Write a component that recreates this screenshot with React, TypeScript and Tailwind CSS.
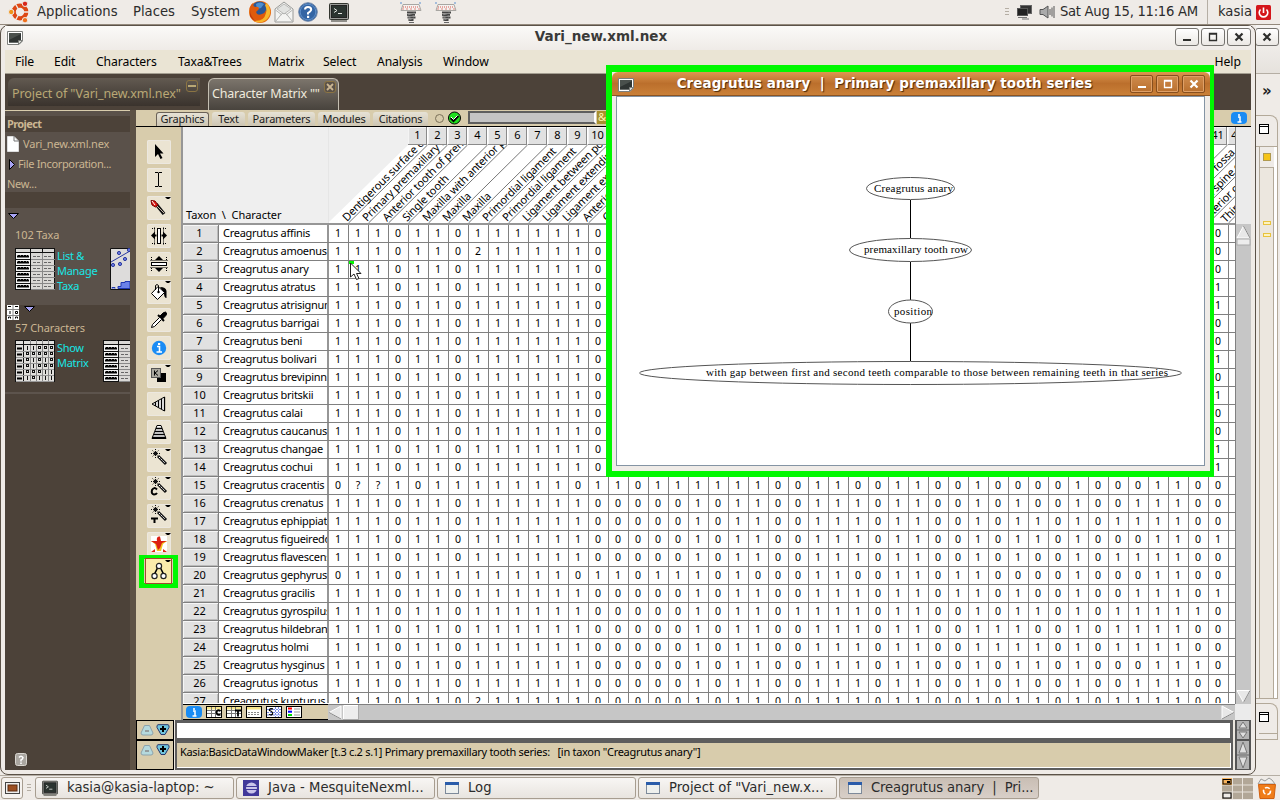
import React from "react";

const UI = "[font-family:'Noto_Sans','Open_Sans',sans-serif]";

const COMMON = "11101101111110";
const MID = "00001011001110110";
const taxa: [string, string][] = [
  ["affinis", COMMON + MID + "01010010111100"],
  ["amoenus", "11101102111110" + MID + "01010010111100"],
  ["anary", COMMON + MID + "01010010111100"],
  ["atratus", COMMON + MID + "01010010111101"],
  ["atrisignum", COMMON + MID + "01010010111101"],
  ["barrigai", COMMON + MID + "01010010111100"],
  ["beni", COMMON + MID + "01010010111100"],
  ["bolivari", COMMON + MID + "01010010111101"],
  ["brevipinnis", COMMON + MID + "01010010111100"],
  ["britskii", COMMON + MID + "01010010111101"],
  ["calai", COMMON + MID + "01010010111100"],
  ["caucanus", COMMON + MID + "01010010111100"],
  ["changae", COMMON + MID + "01010010111101"],
  ["cochui", COMMON + MID + "01010010111101"],
  ["cracentis", "0??10111111101" + "10111111001100110" + "01000010001100"],
  ["crenatus", COMMON + MID + "01010010011100"],
  ["ephippiatus", COMMON + MID + "01011010111100"],
  ["figueiredoi", COMMON + MID + "01011010001101"],
  ["flavescens", COMMON + MID + "01010010111100"],
  ["gephyrus", "01101111111101" + "10111010001100110" + "11000010001100"],
  ["gracilis", COMMON + MID + "11010010011101"],
  ["gyrospilus", COMMON + "00001011011110110" + "01011010111110"],
  ["hildebrandi", COMMON + MID + "01110010111100"],
  ["holmi", COMMON + MID + "01111010111100"],
  ["hysginus", COMMON + MID + "01011010001110"],
  ["ignotus", COMMON + MID + "01010010011100"],
  ["kunturus", "11101102111110" + MID + "01011010111100"],
];

const labels: [number, number, string][] = [
  [0, 0, "Dentigerous surface of"],
  [1, 0, "Primary premaxillary t"],
  [2, 0, "Anterior tooth of prem"],
  [3, 0, "Single tooth"],
  [4, 0, "Maxilla with anterior p"],
  [5, 0, "Maxilla"],
  [6, 0, "Maxilla"],
  [7, 0, "Primordial ligament"],
  [8, 0, "Primordial ligament"],
  [9, 0, "Ligament between pos"],
  [10, 0, "Ligament extending"],
  [11, 0, "Ligament extending"],
  [12, 0, "Anterior margin"],
  [13, 0, "Cartilage"],
  [41, 64, "r fossa"],
  [42, 34, "c spine of"],
  [43, 10, "terior of"],
  [44, -2, "Third"],
];

const columnNumbers = Array.from({ length: 42 }, (_, i) => i + 1);

function Svg({ w, h, className = "", children }: { w: number; h: number; className?: string; children: React.ReactNode }) {
  return (
    <svg width={w} height={h} viewBox={`0 0 ${w} ${h}`} className={`shrink-0 ${className}`}>
      {children}
    </svg>
  );
}

/* ---------- panel icons ---------- */

const Ubuntu = () => (
  <Svg w={24} h={24}>
    <circle cx="12" cy="12" r="6.3" fill="none" stroke="#dd4814" strokeWidth="4.2" />
    <path d="M12 12L21 12M12 12L7.5 4M12 12L7.5 20" stroke="#efebe7" strokeWidth="1.4" />
    <circle cx="12" cy="12" r="3.6" fill="#efebe7" />
    <circle cx="3.2" cy="12" r="2.7" fill="#f09418" stroke="#efebe7" />
    <circle cx="17" cy="3.8" r="2.7" fill="#d8261a" stroke="#efebe7" />
    <circle cx="17" cy="20.2" r="2.7" fill="#f0701c" stroke="#efebe7" />
  </Svg>
);
const Firefox = () => (
  <Svg w={24} h={24}>
    <circle cx="12" cy="12" r="11" fill="#e66a10" />
    <circle cx="11.5" cy="9.5" r="8" fill="#2b5797" />
    <path d="M8 4q4-3 8 0l-3 4-4 1z" fill="#4d8fd0" />
    <path d="M1.5 8Q3 4 5 3Q5 6 7 7Q11 6 11 9L8 12Q9 16 14 14Q17 13 18 10Q20 14 16 18Q8 23 3 16Z" fill="#e05a0c" />
    <path d="M19 3Q25 11 20 18Q14 25 6 21Q16 22 18 13Q19 9 17 5Z" fill="#f9b62b" />
    <path d="M2 9Q2 17 8 21Q4 20 2 16Z" fill="#c0380c" />
  </Svg>
);
const Mail = () => (
  <Svg w={20} h={22}>
    <path d="M1 8L10 1L19 8V21H1Z" fill="#f4f4f2" stroke="#999a98" />
    <path d="M3 8L10 3L17 8L10 13Z" fill="#e2e3e1" stroke="#b8b8b6" />
    <path d="M1.5 20.5L8 12.5H12L18.5 20.5M1.5 9L8 14M18.5 9L12 14" fill="none" stroke="#b5b6b4" />
  </Svg>
);
const Question = () => (
  <Svg w={20} h={20}>
    <circle cx="10" cy="10" r="9.3" fill="#3465a4" stroke="#6f86a8" />
    <circle cx="10" cy="10" r="7.8" fill="none" stroke="#5f8fc8" />
    <path d="M7 7.5Q7 5 10 5Q13.2 5 13.2 7.5Q13.2 9 10 11V12.5" fill="none" stroke="#fff" strokeWidth="2" />
    <rect x="9" y="13.8" width="2.2" height="2.2" fill="#fff" />
  </Svg>
);
const Terminal = ({ s = 20 }: { s?: number }) => (
  <svg width={s} height={s} viewBox="0 0 20 20" className="shrink-0">
    <rect x="0.5" y="1.5" width="19" height="16" rx="1" fill="#9a9b98" stroke="#33352f" />
    <rect x="2.5" y="3.5" width="15" height="12" fill="#2b3430" stroke="#222" />
    <path d="M5 6.5l3 2-3 2M9 11.5h4" fill="none" stroke="#e6e8e4" />
    <path d="M2 19h16" stroke="#33352f" />
  </svg>
);
const Spring = () => (
  <Svg w={22} h={21}>
    <path d="M3 2.5H19L21 8.5H1Z" fill="#f4f2f0" stroke="#a8a6a2" />
    <path d="M3 5h16" stroke="#d8564c" strokeDasharray="1 1" />
    <path d="M2 7h18" stroke="#e08a82" strokeDasharray="2 2" />
    <path d="M0 1h3M19 1h3" stroke="#5a8fd0" strokeDasharray="2 1" />
    <path d="M7 10.5h9M7 13h8M7.5 15.5h8M8.5 18h5" stroke="#444" strokeWidth="1.8" />
    <path d="M14.5 11l-7 2M14.5 13.5l-6 2M14 16l-5 2" stroke="#888" />
    <path d="M9 20.5h5" stroke="#666" />
  </Svg>
);
const Network = () => (
  <Svg w={15} h={15}>
    <rect x="3.5" y="0.5" width="11" height="8" fill="#333" stroke="#666" />
    <rect x="0.5" y="3.5" width="10" height="7" fill="#222" stroke="#555" />
    <path d="M1 12.5h9M5 14h7" stroke="#777" />
  </Svg>
);
const Volume = () => (
  <Svg w={16} h={14}>
    <path d="M1 4.5H4L9 1V13L4 9.5H1Z" fill="#aaa" stroke="#555" />
    <path d="M11 4v6M13 2.5v9M15 1v12" stroke="#555" />
  </Svg>
);
const Power = () => (
  <Svg w={15} h={15}>
    <rect width="15" height="15" rx="1.5" fill="#d4161b" />
    <path d="M4.5 4.5A4.3 4.3 0 1 0 10.5 4.5M7.5 2.5V8" fill="none" stroke="#fff" strokeWidth="1.6" />
  </Svg>
);
const Note = () => (
  <Svg w={16} h={14}>
    <path d="M0.5 0.5H15.5V10L12 13.5H0.5Z" fill="#fff" stroke="#7d7f7c" />
    <path d="M2 2H14V9L11 11.5H2Z" fill="#4a504c" />
    <path d="M2 9L14 3V9L11 11.5H2Z" fill="#2f3432" />
    <path d="M15.5 9.5H11.5V13.5Z" fill="#d8dad6" stroke="#7d7f7c" />
  </Svg>
);

function WinButton({ kind, orange = false }: { kind: "min" | "max" | "close"; orange?: boolean }) {
  const c = orange ? "#fff" : "#2e2e2c";
  return (
    <div
      className={
        orange
          ? "flex h-[18px] w-[23px] items-center justify-center rounded-[2px] border border-[#874f1e] bg-linear-to-b from-[#cf8b4c] to-[#b9702e] shadow-[inset_0_0_0_1px_#dfa067]"
          : "flex h-[18px] w-6 items-center justify-center rounded-[3px] border border-[#75736f] bg-linear-to-b from-white to-[#ebe8e4]"
      }
    >
      <Svg w={10} h={10}>
        {kind === "min" && <path d="M1 8h8" stroke={c} strokeWidth="2" />}
        {kind === "max" && <path d="M1.5 1.5h7v7h-7zM1 2h8" fill="none" stroke={c} strokeWidth="1.3" />}
        {kind === "close" && <path d="M1.5 1.5l7 7M8.5 1.5l-7 7" stroke={c} strokeWidth="2.2" />}
      </Svg>
    </div>
  );
}

/* ---------- tool palette ---------- */

const wand = (
  <>
    <circle cx="8.5" cy="5.5" r="2" fill="#111" />
    <path d="M8.5 1v9M4 5.5h9M5.5 2.5l6 6M11.5 2.5l-6 6" stroke="#111" strokeDasharray="1 1" />
    <path d="M11 8L19 16" stroke="#111" strokeWidth="3" />
    <path d="M12 9L18 15" stroke="#fff" strokeDasharray="2 1" />
  </>
);

const tools: { menu?: boolean; art: React.ReactNode }[] = [
  { art: <path d="M8 4V17L11 14L13.5 19L15.5 18L13 13.5H16.5Z" fill="#000" /> },
  { art: <path d="M8 4.5h3l.5 1 .5-1h3M11.5 5v13M8 18.5h3l.5-1 .5 1h3" fill="none" stroke="#000" /> },
  {
    menu: true,
    art: (
      <>
        <path d="M9 8L17 18" stroke="#111" strokeWidth="3.5" />
        <path d="M10 10L17 17" stroke="#c9b9a8" />
        <path d="M4 4.5L8 5L11 9L8.5 11L5 9Z" fill="#e01a14" stroke="#700" />
        <path d="M5 5l3 4" stroke="#fff" />
      </>
    ),
  },
  {
    art: (
      <>
        <rect x="10.5" y="4.5" width="3" height="15" fill="#fff" stroke="#000" />
        <path d="M4 11.5l4-4v8zM20 11.5l-4-4v8z" fill="#000" />
        <path d="M8 11.5h1.500M14.500 11.5h2" stroke="#000" strokeWidth="2" />
        <path d="M7.5 3.5v17M16.5 3.5v17M5 4.5h3M16 4.5h4M5 19.5h3M16 19.5h4" stroke="#000" strokeDasharray="1 1" />
      </>
    ),
  },
  {
    art: (
      <>
        <rect x="4.5" y="10.5" width="15" height="3" fill="#fff" stroke="#000" />
        <path d="M12 4l4 4h-8zM12 20l4-4h-8z" fill="#000" />
        <path d="M3.5 8.5h17M3.5 15.5h17M4.500 5v4M19.500 5v4M4.500 16v4M19.500 16v4" stroke="#000" strokeDasharray="1 1" />
      </>
    ),
  },
  {
    menu: true,
    art: (
      <>
        <path d="M13 7Q19 7 19.5 11V18Q17 18 17 13Z" fill="#000" />
        <path d="M4.5 13.5L11 6.5L17.5 12.5L10.5 19.5Z" fill="#fff" stroke="#000" />
        <path d="M8.5 10V5.5Q10 3.5 11.5 5.5V11" fill="none" stroke="#000" />
        <circle cx="11.5" cy="12" r="1.2" fill="#000" />
      </>
    ),
  },
  {
    art: (
      <>
        <path d="M13 8L16 5Q19 3 19.5 5Q20 7 17.5 9L15.5 11Z" fill="#000" stroke="#000" />
        <path d="M11 7L17 13" stroke="#000" strokeWidth="2" />
        <path d="M12.5 9.5L5.5 16.5L4.5 19.5L7.5 18.5L14.5 11.5" fill="#fff" stroke="#000" />
      </>
    ),
  },
  {
    art: (
      <>
        <circle cx="12" cy="12" r="7.2" fill="#1a8cf4" />
        <path d="M10 10.5h2.5v5.5M9.5 16h5.5" stroke="#fff" strokeWidth="1.6" fill="none" />
        <rect x="11" y="7" width="2.2" height="2" fill="#fff" />
      </>
    ),
  },
  {
    menu: true,
    art: (
      <>
        <rect x="10" y="9" width="9" height="9" fill="#000" />
        <rect x="4.5" y="4.5" width="9" height="9" fill="#aaa89f" stroke="#555" />
        <path d="M7.5 6.5v5M11 6.5l-3 2.5 3 2.5" fill="none" stroke="#000" />
      </>
    ),
  },
  {
    art: (
      <>
        <path d="M5 12L17.5 5V19Z" fill="#fff" stroke="#000" />
        <path d="M8.5 10v4M11.5 8.5v7M14.5 7v10M17.5 5v14" stroke="#000" strokeWidth="1.3" />
      </>
    ),
  },
  {
    art: (
      <>
        <path d="M10 5.5H14L19 18.5H5Z" fill="#fff" stroke="#000" />
        <path d="M9 8.5h6M8 11.5h8M7 14.5h10M5 17.5h14" stroke="#000" strokeWidth="1.3" />
      </>
    ),
  },
  { menu: true, art: wand },
  {
    menu: true,
    art: (
      <>
        {wand}
        <path d="M10 13.5Q7 10.5 5 14Q4 18 7 18.5Q9 18.5 10 17" fill="none" stroke="#000" strokeWidth="2" />
      </>
    ),
  },
  {
    menu: true,
    art: (
      <>
        {wand}
        <path d="M4 14.5h7M7.5 14v5" stroke="#000" strokeWidth="2" />
      </>
    ),
  },
  {
    menu: true,
    art: (
      <>
        <rect x="4" y="4" width="16" height="16" fill="#fff" />
        <path d="M4 9H20L16 12L14 19H10L8 12Z" fill="#f4c020" />
        <path d="M4 9L10 9Q9 4 13 4.5L14 9H20L15 11L13 16L11 18L9 12Z" fill="#dc1f12" />
        <path d="M4 20l4-3v3zM20 20l-4-3v3z" fill="#e02818" />
      </>
    ),
  },
];

function ToolPalette() {
  return (
    <div className="flex w-[45px] shrink-0 flex-col items-center gap-1 bg-[#d8ccac] pt-[13px] pl-px">
      {tools.map((t, i) => (
        <div key={i} className="size-6 shrink-0 rounded-[2px] bg-[#ebe4d2] shadow-[inset_0_0_0_1px_#ece8e0]">
          <Svg w={24} h={24}>
            {t.art}
            {t.menu && <path d="M18 1h6l-1 1-1 1h-2l-1-1z" fill="#000" />}
          </Svg>
        </div>
      ))}
      <div className="-mt-[5px] -ml-px flex h-[33px] w-[39px] shrink-0 items-center justify-center border-[5px] border-t-4 border-[#00f800] bg-[#ddd0b0]">
        <div className="flex h-[26px] w-[27px] shrink-0 items-center justify-center border border-[#a04a30] bg-[#fbecab]">
          <Svg w={24} h={24}>
            <path d="M11 8L7 16M13 8L17 16" stroke="#000" strokeWidth="1.6" />
            <circle cx="12" cy="7" r="2.6" fill="#fff" stroke="#222" strokeWidth="1.2" />
            <circle cx="7.5" cy="17" r="2.6" fill="#fff" stroke="#222" strokeWidth="1.2" />
            <circle cx="16.5" cy="17" r="2.6" fill="#fff" stroke="#222" strokeWidth="1.2" />
            <path d="M18 1h6l-1 1-1 1h-2l-1-1z" fill="#000" />
          </Svg>
        </div>
      </div>
    </div>
  );
}

/* ---------- project sidebar ---------- */

const ListIcon = ({ w = 40 }: { w?: number }) => (
  <svg width={w} height={42} viewBox={`0 0 ${w} 42`} className="shrink-0">
    <rect x="0.5" y="0.5" width="39" height="41" fill="#d9d8d5" stroke="#111" />
    <rect x="1" y="5" width="14" height="36" fill="#f4f4f4" />
    <path d="M0 4.5h40M15.5 0v42M27.5 0v4" stroke="#111" />
    {[8, 14, 20, 26, 32, 38].map((y) => (
      <g key={y}>
        <path d={`M2 ${y}.5h12`} stroke="#000" strokeWidth="2" />
        <path d={`M3 ${y - 1}.5h10`} stroke="#000" strokeDasharray="2 1" />
        <path d={`M18 ${y}.5h7M29 ${y}.5h8`} stroke="#666" strokeDasharray="3 1" />
        <path d={`M16 ${y + 3}.5h24`} stroke="#888" />
        <path d={`M0 ${y + 3}.5h15`} stroke="#111" />
      </g>
    ))}
    <path d="M27.5 5v36" stroke="#888" />
  </svg>
);

const MatrixIcon = () => (
  <Svg w={40} h={42}>
    <rect x="0.5" y="0.5" width="39" height="41" fill="#e0dfdc" stroke="#111" />
    <path d="M0 4.5h40M8.5 0v42" stroke="#111" />
    {["11000", "00000", "01010", "01000", "00011", "10111"].map((row, r) => (
      <g key={r}>
        <path d={`M2 ${8 + r * 6}.5h5`} stroke="#000" strokeWidth="2" />
        <path d={`M1 ${11 + r * 6}.5h38`} stroke="#999" />
        {row.split("").map((v, c) =>
          v === "1" ? (
            <path key={c} d={`M${12 + c * 6}.5 ${6 + r * 6}v4`} stroke="#111" />
          ) : (
            <rect key={c} x={11.5 + c * 6} y={6.5 + r * 6} width="2" height="2" fill="none" stroke="#111" />
          ),
        )}
      </g>
    ))}
    <path d="M15.5 5v36M21.5 5v36M27.5 5v36M33.5 5v36M15.5 0v4M21.5 0v4M27.5 0v4M33.5 0v4" stroke="#888" />
  </Svg>
);

const ChartIcon = () => (
  <Svg w={20} h={42}>
    <path d="M20 0.5H0.5V41.5H20" fill="#dddcdb" stroke="#111" />
    <path d="M1 14L20 3" stroke="#2b3aa0" />
    {[[9, 5], [15, 11], [10, 16], [3, 17], [19, 2]].map(([x, y]) => (
      <circle key={`${x}-${y}`} cx={x} cy={y} r="1.6" fill="#6b7be0" stroke="#2b3aa0" />
    ))}
    <path d="M2 40.5v-1h3v1M8 40.5v-2h3v-4h4v-1h5v7z" fill="#6b82e8" stroke="#2038b0" />
  </Svg>
);

const Disclosure = () => (
  <svg width={12} height={7} viewBox="0 0 12 7" className="block">
    <path d="M0.5 0.5H10.5L5.5 5.5Z" fill="#a8a4f4" stroke="#000" />
  </svg>
);

function Sidebar() {
  return (
    <div className={`flex w-[131px] shrink-0 border-r-[6px] border-[#5d5245] ${UI} text-[11px] tracking-[-0.1px] text-[#cbb692]`}>
      <div className="flex w-[125px] flex-col overflow-hidden bg-[#4c4239]">
        <div className="h-1.5 shrink-0 border-t border-[#d8ccac] bg-[#5a514a]" />
        <div className="flex h-4 shrink-0 items-center pt-px pl-0.5 text-[11px] font-bold tracking-[-0.6px]">Project</div>
        <div className="flex h-[60px] shrink-0 flex-col bg-[#5a514a] whitespace-nowrap">
          <div className="flex h-6 shrink-0 items-center pl-0.5">
            <Svg w={12} h={16}>
              <path d="M0.5 0.5H7L11.5 5V15.5H0.5Z" fill="#fff" stroke="#ddd" />
              <path d="M7 0V5H12" fill="none" stroke="#777" />
            </Svg>
            <span className="ml-1 tracking-[-0.2px]">Vari_new.xml.nex</span>
          </div>
          <div className="flex h-4 shrink-0 items-center pl-1">
            <Svg w={6} h={11}>
              <path d="M0.5 0.5L5.5 5.5L0.5 10.5Z" fill="#a8a4f4" stroke="#000" />
            </Svg>
            <span className="ml-[3px] tracking-[-0.35px]">File Incorporation...</span>
          </div>
          <div className="flex h-6 shrink-0 items-center pl-0.5 tracking-[-0.3px]">New...</div>
        </div>
        <div className="h-4 shrink-0" />
        <div className="flex h-[97px] shrink-0 flex-col bg-[#5a514a] pt-[5px]">
          <div className="pl-[3px]"><Disclosure /></div>
          <div className="mt-1.5 h-[17px] pl-2.5 leading-[17px]">102 Taxa</div>
          <div className="mt-[5px] flex pl-2.5">
            <ListIcon />
            <div className="ml-0.5 w-[53px] shrink-0 leading-[15px] tracking-[-0.3px] text-[#17e6e6]">List &amp;<br />Manage<br />Taxa</div>
            <ChartIcon />
          </div>
        </div>
        <div className="flex h-[89px] shrink-0 flex-col border-b-2 border-[#5d544d] pl-0.5">
          <div className="flex h-[15px] items-start">
            <Svg w={12} h={15}>
              <rect width="12" height="15" fill="#fff" />
              <path d="M6 0v15M0 4.5h12M0 10.5h12" stroke="#888" />
              <path d="M1 1.5h3M8 1.5h3M3 6v3M1.5 13.5v-1.5h2v1.5M8.5 13.5v-1.5h2v1.5M8.5 6.5h2v2h-2z" fill="none" stroke="#000" />
            </Svg>
            <div className="ml-[5px] pt-px"><Disclosure /></div>
          </div>
          <div className="h-[15px] pl-2 leading-[15px]">57 Characters</div>
          <div className="mt-1 flex pt-px pl-2">
            <MatrixIcon />
            <div className="ml-0.5 w-[46px] shrink-0 leading-[15px] tracking-[-0.3px] text-[#17e6e6]">Show<br />Matrix</div>
            <ListIcon w={27} />
          </div>
        </div>
        <div className="mt-auto mb-1 ml-2.5">
          <Svg w={12} h={13}>
            <rect x="0.5" y="0.5" width="11" height="12" rx="2" fill="#aaa6a0" stroke="#d9d6d0" />
            <path d="M4 4.5Q6 2 8 4.5Q8 6 6 7V8.5M6 9.5V11" fill="none" stroke="#fff" strokeWidth="1.5" />
          </Svg>
        </div>
      </div>
    </div>
  );
}

/* ---------- matrix ---------- */

function MatrixHeader() {
  return (
    <div className="relative h-[98px] w-[1052px] shrink-0 overflow-hidden border-b-2 border-[#969696] bg-[#efefef]">
      <svg width={1052} height={96} className="absolute top-0 left-0">
        <path d="M145 96L225 18H1052V96Z" fill="#fff" />
        <path d="M225 18V0H1052V18Z" fill="#fff" />
        <path d="M145.5 0V96" stroke="#e6e6e6" />
        {Array.from({ length: 45 }, (_, i) => (
          <path key={i} d={`M${165.5 + i * 20} 96l79 -78`} stroke="#777" />
        ))}
      </svg>
      {labels.map(([col, shift, text]) => (
        <span
          key={col}
          className="absolute top-[83px] left-[166px] origin-bottom-left text-[11px] leading-[14px] tracking-[-0.2px] whitespace-nowrap text-black"
          style={{ transform: `translate(${col * 20 + shift * 0.707}px, ${-shift * 0.707}px) rotate(-45deg)` }}
        >
          {text}
        </span>
      ))}
      <div className="absolute top-0 left-[225px] flex">
        {columnNumbers.map((n) => (
          <div
            key={n}
            className="mr-px flex h-[18px] w-[19px] shrink-0 items-center justify-center border-r border-b border-[#8a8a8a] bg-[#e1e1e1] pl-px text-[11px] text-black shadow-[inset_1px_1px_0_#f4f4f4]"
          >
            {n}
          </div>
        ))}
      </div>
      <div className="absolute top-[81px] left-[3px] text-[11px] leading-[14px] tracking-[-0.05px] whitespace-pre">{"Taxon  \\  Character"}</div>
    </div>
  );
}

function Matrix() {
  return (
    <div className={`flex min-w-0 flex-1 flex-col border-l-2 border-[#969696] bg-white ${UI} text-[11px] text-black`}>
      <div className="flex h-[577px]">
        <div className="flex w-[1052px] shrink-0 flex-col overflow-hidden">
          <MatrixHeader />
          <div className="flex h-[478px] flex-col overflow-hidden">
            {taxa.map(([name, states], r) => (
              <div key={name} className="flex h-[18px] shrink-0 border-b border-[#808080]">
                <div className="flex w-[36px] shrink-0 items-center justify-center border-r border-[#808080] bg-[#e1e1e1] pr-0.5 shadow-[inset_1px_1px_0_#f6f6f6,inset_-1px_-1px_0_#bbb]">
                  {r + 1}
                </div>
                <div className="flex w-[110px] shrink-0 items-center overflow-hidden border-r-2 border-[#969696] pl-1 tracking-[-0.28px] whitespace-nowrap">
                  Creagrutus {name}
                </div>
                {states.split("").map((s, c) => (
                  <div key={c} className="flex w-5 shrink-0 items-center justify-center border-r border-[#808080] pr-px text-[10.5px]">
                    {s}
                  </div>
                ))}
              </div>
            ))}
          </div>
        </div>
        <div className="flex w-4 shrink-0 flex-col border-l border-[#808080] bg-[#c6c6c6]">
          <div className="h-[97px] w-[15px] bg-[#ebebeb]" />
          <Svg w={15} h={22}>
            <path d="M7.5 2L14 14H1Z" fill="#e8e8e8" stroke="#fff" />
            <path d="M7.5 2L14 14" stroke="#888" />
            <rect x="1" y="15" width="13" height="6" fill="#ededed" stroke="#aaa" />
          </Svg>
          <div className="flex-1" />
          <Svg w={15} h={14}>
            <path d="M1 0.5H14L7.5 12.5Z" fill="#e8e8e8" stroke="#fff" />
            <path d="M14 0.5L7.5 12.5" stroke="#888" />
          </Svg>
        </div>
      </div>
      <div className="flex h-4 shrink-0 bg-[#ebebeb]">
        <div className="flex w-[145px] items-center gap-1 border-t border-b border-black bg-[#d8ccac] pl-[3px]">
          <Svg w={16} h={12}>
            <rect width="16" height="12" rx="4" fill="#1a8cf4" />
            <path d="M7 5h2v5M6.5 10h4M8 2v2" fill="none" stroke="#fff" strokeWidth="1.5" />
          </Svg>
          {["C", "T", "", "S", "L"].map((k, i) => (
            <Svg key={i} w={16} h={12}>
              <rect x="0.5" y="0.5" width="15" height="11" fill="#fff" stroke="#000" />
              {k !== "L" && k !== "S" && <rect x="1" y="1" width="14" height="2.5" fill="#f6e58a" />}
              {(k === "C" || k === "T") && <path d="M1 4.5h14M1 7.5h14M5.5 1v10M9.5 1v10" stroke="#777" />}
              {k === "C" && <path d="M14.5 5Q11 3 10.5 6.5Q11 10 14.5 8.5" fill="none" stroke="#000" strokeWidth="1.8" />}
              {k === "T" && <path d="M9 4.5h6M12 4.5v6" stroke="#000" strokeWidth="1.8" />}
              {k === "" && <path d="M2 6.5h12M2 8.5h12" stroke="#888" strokeDasharray="2 1" />}
              {k === "S" && (
                <>
                  <path d="M1 3.5h14M1 6.5h14M1 9h14M9.5 1v10M12.5 1v10" stroke="#7a8ce8" strokeDasharray="2 1" />
                  <path d="M7 3Q3 2 3.5 4.5Q7 5.5 6.5 8Q6 9.5 3 8.5" fill="none" stroke="#000" strokeWidth="1.3" />
                </>
              )}
              {k === "L" && (
                <>
                  <path d="M2 2.5h4" stroke="#f00" strokeWidth="2" />
                  <path d="M2 5.7h4" stroke="#00f" strokeWidth="2" />
                  <path d="M2 9h4" stroke="#0d0" strokeWidth="2" />
                  <path d="M8 3h6M8 6h6M8 9h6" stroke="#999" />
                </>
              )}
            </Svg>
          ))}
        </div>
        <div className="flex w-[907px] items-center justify-between border-t border-[#808080] bg-[#c6c6c6]">
          <Svg w={32} h={15}>
            <path d="M1 7.5L13 1V14Z" fill="#e8e8e8" stroke="#fff" />
            <path d="M1 7.5L13 14" stroke="#888" />
            <rect x="15.5" y="0.5" width="15" height="14" fill="#ededed" stroke="#aaa" />
            <path d="M15.5 14V0.5H30" fill="none" stroke="#fff" />
          </Svg>
          <Svg w={14} h={15}>
            <path d="M1 1V14L13 7.5Z" fill="#e8e8e8" stroke="#fff" />
            <path d="M1 14L13 7.5" stroke="#888" />
          </Svg>
        </div>
      </div>
    </div>
  );
}

const Stepper = ({ h }: { h: number }) => (
  <Svg w={16} h={h} className="ml-0.5">
    <rect width="16" height={h} fill="#555" />
    <rect x="2" y="1" width="12" height={h - 2} fill="#b4b4b4" />
    <path d={`M8 2L12 ${h / 2 - 2}H4Z M4 ${h / 2 + 2}H12L8 ${h - 2}Z`} fill="#e0e0e0" stroke="#777" />
    <path d={`M2 ${h / 2}h12`} stroke="#666" />
  </Svg>
);

function Console() {
  const fold = (
    <>
      <Svg w={14} h={12}>
        <path d="M4.5 1.5H9.5L13 9Q13 11 11 11H3Q1 11 1 9Z" fill="#b5d9dd" stroke="#8ca3ac" />
        <path d="M5 7h4" stroke="#888" strokeWidth="1.5" />
      </Svg>
      <Svg w={14} h={12}>
        <path d="M2 0.7H12Q13.5 1 13 3.5L9 10.5H5L1 3.5Q0.5 1 2 0.7Z" fill="#70c5dc" stroke="#26366c" />
        <path d="M4 5h6M7 2v6" stroke="#000" strokeWidth="2" />
      </Svg>
    </>
  );
  return (
    <div className="flex h-[50px] shrink-0 flex-col bg-[#ece8e0]">
      <div className="flex h-5">
        <div className="flex w-[38px] justify-center gap-0.5 border border-black bg-[#d8ccac] pt-[3px]">{fold}</div>
        <div className="ml-px flex w-[1059px] border-2 border-t-[3px] border-r-[3px] border-[#5d5d5d] bg-white" />
        <Stepper h={20} />
      </div>
      <div className="flex h-[30px]">
        <div className="flex w-[38px] justify-center gap-0.5 border border-black bg-[#d8ccac] pt-[3px]">{fold}</div>
        <div className={`ml-px flex w-[1059px] items-start border-2 border-t-[3px] border-[#5d5d5d] bg-[#d8ccac] pl-[3px] ${UI} text-[11px] leading-[17px] tracking-[-0.29px] whitespace-pre text-black shadow-[inset_-1px_-1px_0_#fff]`}>
          {"Kasia:BasicDataWindowMaker [t.3 c.2 s.1] Primary premaxillary tooth series:   [in taxon \"Creagrutus anary\"]"}
        </div>
        <Stepper h={30} />
      </div>
    </div>
  );
}

function SubTabs() {
  const tab = "flex h-[14px] items-center justify-center rounded-t-[3px] bg-linear-to-b from-[#e6e2d6] to-[#cdc5b2]";
  return (
    <div className={`flex h-[17px] shrink-0 items-end border-b border-black bg-[#d8ccac] ${UI} text-[11px] tracking-[-0.2px] text-[#222]`}>
      <div className={`${tab} ml-5 w-[53px] border border-b-0 border-[#6b6258] bg-[#e2dfd8]`}>Graphics</div>
      <div className={`${tab} ml-[3px] w-[33px]`}>Text</div>
      <div className={`${tab} ml-[3px] w-[67px]`}>Parameters</div>
      <div className={`${tab} ml-[3px] w-[52px]`}>Modules</div>
      <div className={`${tab} ml-[3px] w-[55px]`}>Citations</div>
      <Svg w={40} h={16} className="ml-1">
        <circle cx="7.5" cy="8.5" r="4" fill="none" stroke="#7a7058" />
        <circle cx="22.5" cy="8" r="6" fill="#1fe01f" stroke="#000" />
        <path d="M18.5 8l3 3 5-5" fill="none" stroke="#000" strokeWidth="2" />
        <path d="M19 7l2.5 2.5 4-4" fill="none" stroke="#fff" />
      </Svg>
      <div className="mb-0.5 -ml-1 h-[13px] w-[128px] border-2 border-[#5e5e5e] border-r-white bg-[#c4c4c4]" />
      <div className="mb-0.5 ml-px flex h-[13px] w-3 items-center bg-[#a8902e] pl-px text-[#fff6b0]">&amp;</div>
      <div className="mr-1 mb-0.5 ml-auto">
        <Svg w={16} h={12}>
          <rect width="16" height="12" rx="4" fill="#1a8cf4" />
          <path d="M7 5h2v5M6.5 10h4M8 2v2" fill="none" stroke="#fff" strokeWidth="1.5" />
        </Svg>
      </div>
    </div>
  );
}

function MainWindow() {
  const menu: [string, string][] = [
    ["File", "w-[39px]"], ["Edit", "w-[42px]"], ["Characters", "w-[82px]"], ["Taxa&Trees", "w-[90px]"],
    ["Matrix", "w-[55px]"], ["Select", "w-[54px]"], ["Analysis", "w-[66px]"], ["Window", "w-[60px]"],
  ];
  return (
    <div className="flex w-[1256px] shrink-0 flex-col rounded-lg border border-[#5b5248] bg-[#efebe7] px-1">
      <div className="flex h-6 shrink-0 items-start bg-linear-to-b from-[#fbfaf8] to-[#efebe7] pl-0.5">
        <div className="w-5 pt-[5px]"><Note /></div>
        <div className="flex-1 pt-px text-center font-['DejaVu_Sans',sans-serif] text-[13.5px] leading-[18px] font-bold text-[#3a3a38]">Vari_new.xml.nex</div>
        <div className="flex gap-0.5 pt-0.5">
          <WinButton kind="min" />
          <WinButton kind="max" />
          <WinButton kind="close" />
        </div>
      </div>
      <div className={`flex h-6 shrink-0 items-center border-b border-[#a39d90] bg-[#eae4d4] pt-0.5 pl-2.5 ${UI} text-[12.2px] text-black`}>
        {menu.map(([m, w]) => (
          <div key={m} className={`${w} shrink-0 tracking-[-0.1px] whitespace-nowrap`}>{m}</div>
        ))}
        <div className="ml-auto pr-2.5">Help</div>
      </div>
      <div className={`flex h-9 shrink-0 bg-[#4c4239] pt-1 pl-[3px] ${UI} text-[12.5px]`}>
        <div className="relative flex h-7 w-48 items-center rounded-tl-md bg-linear-to-b from-[#625a51] to-[#3a332d] pl-1 whitespace-nowrap text-[#b9a875]">
          <span className="pt-1 tracking-[-0.08px]">Project of "Vari_new.xml.nex"</span>
          <div className="absolute top-0.5 right-0.5 flex size-3 items-center justify-center rounded-[3px] border border-[#8b7443]">
            <div className="h-0.5 w-2 bg-[#b9a875]" />
          </div>
        </div>
        <div className="relative ml-2 flex h-8 w-[131px] items-center rounded-t-md border border-b-0 border-[#c5bfb2] bg-linear-to-b from-[#7c756c] to-[#48433d] pl-[3px] whitespace-nowrap text-[#efeadd]">
          <span className="tracking-[-0.22px]">Character Matrix ""</span>
          <div className="absolute top-0.5 right-0.5 flex size-3 items-center justify-center rounded-[3px] border border-[#8b7443] bg-[#5b5248]">
            <Svg w={8} h={8}><path d="M1 1l6 6M7 1l-6 6" stroke="#cbb692" strokeWidth="1.8" /></Svg>
          </div>
        </div>
      </div>
      <div className="flex h-[660px] shrink-0">
        <Sidebar />
        <div className="flex min-w-0 flex-1 flex-col">
          <SubTabs />
          <div className="flex h-[593px] shrink-0">
            <ToolPalette />
            <Matrix />
          </div>
          <Console />
        </div>
      </div>
    </div>
  );
}

/* ---------- window behind ---------- */

function BackWindow() {
  const restore = (
    <Svg w={10} h={10}>
      <rect x="0.5" y="0.5" width="9" height="9" fill="#fff" stroke="#000" />
      <path d="M0 2.5h10" stroke="#000" />
    </Svg>
  );
  return (
    <div className="flex flex-1 flex-col overflow-hidden bg-[#efebe7]">
      <div className="-ml-px flex h-[49px] shrink-0 items-start border-b border-[#b5aea4] bg-linear-to-b from-[#f6f4f2] to-[#e6e2dd] pt-[3px]">
        <WinButton kind="close" />
      </div>
      <div className="flex h-[41px] shrink-0 items-start pt-2">
        <span className="pl-1.5 font-['DejaVu_Sans',sans-serif] text-[15px] leading-[18px] font-bold text-[#222]">»</span>
      </div>
      <div className="mr-0.5 flex h-8 shrink-0 items-center rounded-tr-lg border-t border-r border-b border-[#b3a999] pb-1 pl-[3px]">{restore}</div>
      <div className="mr-0.5 flex h-[552px] shrink-0 border-r border-b border-[#b3a999] bg-white pr-[3px]">
        <div className="w-1 border-r border-[#b3a999] bg-[#efebe7]" />
        <div className="flex w-3.5 flex-col items-center bg-[#efebe7] pt-1.5">
          <div className="size-2 shrink-0 border border-[#b09a50] bg-[#f6c418]" />
          <div className="mt-1.5 flex w-full flex-1 flex-col items-center border-t border-r border-[#b3a999] bg-[#ece7df] pt-[53px]">
            <div className="h-1 w-2 border border-[#e8c33e] bg-[#fdf3c0]" />
            <div className="mt-2 h-1 w-2 border border-[#e8c33e] bg-[#fdf3c0]" />
          </div>
        </div>
      </div>
      <div className="mt-1 mr-0.5 h-[37px] shrink-0 rounded-tr-lg border-t border-r border-b border-[#b3a999] pt-2 pl-[3px]">
        {restore}
        <div className="mt-[11px] border-t border-[#b3a999]" />
      </div>
    </div>
  );
}

/* ---------- popup ---------- */

function Diagram() {
  const nodes: [number, number, number, number, number, string][] = [
    [293.5, 91.5, 44, 11, 79, "Creagrutus anary"],
    [293.5, 153, 61, 11.5, 104, "premaxillary tooth row"],
    [293.5, 214.5, 22, 11.5, 38, "position"],
    [293.5, 276, 271, 11.5, 462, "with gap between first and second teeth comparable to those between remaining teeth in that series"],
  ];
  const starts = [257, 247, 277, 89];
  return (
    <svg width={587} height={367} className="block font-['Liberation_Serif',serif] text-[11px]">
      <path d="M293.5 103V141M293.5 165V203M293.5 226V264" stroke="#000" />
      {nodes.map(([cx, cy, rx, ry, w, t], i) => (
        <g key={t}>
          <ellipse cx={cx} cy={cy} rx={rx} ry={ry} fill="none" stroke="#555" />
          <text x={starts[i]} y={cy + 3} textLength={w} fill="#000">{t}</text>
        </g>
      ))}
    </svg>
  );
}

function Popup() {
  return (
    <div className="absolute top-[65px] left-[606px] h-[412px] w-[608px] border-[6px] border-t-[7px] border-r-4 border-[#00f800] bg-[#efebe7]">
      <div className="flex h-6 items-center rounded-t-md border-b border-[#8c5422] bg-linear-to-b from-[#dc9650] via-[#bb6f2c] to-[#ca8038] pr-[5px] pl-1.5">
        <div className="w-[29px] pt-0.5"><Note /></div>
        <div className="flex-1 text-center font-['DejaVu_Sans',sans-serif] text-[13.5px] font-bold tracking-[0.05px] whitespace-pre text-white [text-shadow:1px_1px_1px_#4a2808]">
          {"Creagrutus anary  |  Primary premaxillary tooth series"}
        </div>
        <div className="ml-2 flex gap-[3px] pt-px">
          <WinButton kind="min" orange />
          <WinButton kind="max" orange />
          <WinButton kind="close" orange />
        </div>
      </div>
      <div className="ml-1 h-[370px] w-[589px] border border-[#8494a4] bg-white">
        <Diagram />
      </div>
    </div>
  );
}

/* ---------- desktop panels ---------- */

const WindowGlyph = () => (
  <Svg w={14} h={12}>
    <rect x="0.5" y="0.5" width="13" height="11" fill="#eef0ee" stroke="#7d8a9a" />
    <rect x="0" y="0" width="14" height="3" fill="#2a5caa" />
  </Svg>
);

function TopPanel() {
  return (
    <div className="flex h-[25px] shrink-0 items-center border-b border-[#93897c] bg-[#efebe7] font-['DejaVu_Sans',sans-serif] text-[13.2px] text-[#2c2c2c]">
      <div className="ml-2"><Ubuntu /></div>
      <span className="ml-[5px] w-24">Applications</span>
      <span className="w-[58px]">Places</span>
      <span className="w-[57px]">System</span>
      <Firefox />
      <div className="ml-[2px]"><Mail /></div>
      <div className="ml-1"><Question /></div>
      <div className="ml-[11px]"><Terminal /></div>
      <div className="ml-[51px]"><Spring /></div>
      <div className="ml-[13px]"><Spring /></div>
      <div className="ml-auto flex h-full items-center">
        <Svg w={4} h={8}><path d="M0 0.5h4M0 3.5h4M0 6.5h4" stroke="#b5aea4" /></Svg>
        <div className="ml-2"><Network /></div>
        <div className="mr-[5px] ml-[7px]"><Volume /></div>
        <span className="w-[147px] tracking-[-0.28px] whitespace-nowrap">Sat Aug 15, 11:16 AM</span>
        <div className="h-full border-l border-[#b5aea4]" />
        <span className="mr-1 ml-2.5">kasia</span>
        <div className="mr-[9px]"><Power /></div>
      </div>
    </div>
  );
}

function Task({ icon, text, active = false, className }: { icon: React.ReactNode; text: string; active?: boolean; className: string }) {
  return (
    <div
      className={`flex h-[22px] shrink-0 items-center rounded-[3px] border border-[#a79d90] whitespace-pre ${
        active ? "bg-linear-to-b from-[#c9beb4] to-[#d8cfc8]" : "bg-linear-to-b from-[#f8f6f4] to-[#e8e4df]"
      } ${className}`}
    >
      {icon}
      <span className="ml-[9px]">{text}</span>
    </div>
  );
}

function Taskbar() {
  return (
    <div className="flex h-[25px] shrink-0 items-center border-t border-[#b5aea4] bg-[#efebe7] font-['DejaVu_Sans',sans-serif] text-[13.2px] text-[#2c2c2c]">
      <div className="ml-[1px] flex h-[22px] w-[22px] items-center justify-center rounded-[3px] border border-[#a79d90] bg-[#f5f2ef]">
        <Svg w={15} h={12}>
          <rect x="0.5" y="0.5" width="14" height="11" fill="#efefef" stroke="#444" />
          <rect x="3" y="3" width="9" height="6" fill="#9c4f22" stroke="#5d2c10" />
        </Svg>
      </div>
      <Svg w={4} h={8} className="ml-1"><path d="M0 0.5h4M0 3.5h4M0 6.5h4" stroke="#b5aea4" /></Svg>
      <Task className="ml-1 w-[199px] pl-[6px]" icon={<Terminal s={16} />} text="kasia@kasia-laptop: ~" />
      <Task
        className="ml-0.5 w-[199px] pl-1.5"
        icon={
          <Svg w={16} h={16}>
            <rect width="16" height="16" fill="#40389a" />
            <circle cx="8.5" cy="8" r="5.5" fill="#c9c4ea" />
            <path d="M2 6.5h13M2 9.5h13" stroke="#40389a" />
          </Svg>
        }
        text="Java - MesquiteNexml..."
      />
      <Task className="ml-0.5 w-[199px] pl-[7px]" icon={<WindowGlyph />} text="Log" />
      <Task className="ml-0.5 w-[199px] pl-[7px]" icon={<WindowGlyph />} text={'Project of "Vari_new.x...'} />
      <Task className="ml-0.5 w-[200px] pl-2 tracking-[-0.12px]" active icon={<WindowGlyph />} text="Creagrutus anary  |  Pri..." />
      <Svg w={31} h={21} className="ml-auto">
        <rect width="31" height="21" fill="#b2a797" />
        <path d="M10.5 0v21M20.5 0v21M0 7h31M0 14h31" stroke="#e8e2da" />
        <rect x="0" y="0" width="10" height="7" fill="#f6b25c" />
        <rect x="1" y="1.5" width="8" height="4.5" fill="none" stroke="#000" />
        <path d="M5 3h3v2H5z" fill="#000" />
        <rect x="1" y="15" width="8" height="5" fill="#efebe7" stroke="#000" />
      </Svg>
      <Svg w={20} h={22} className="mr-[3px] ml-1">
        <path d="M1 7L4 2L8 4L12 1L15 3L18 7Z" fill="#efefed" stroke="#9a9a98" />
        <path d="M1.5 7.5H18.5L17 21.5H3Z" fill="#ef7d1a" stroke="#d06010" />
        <circle cx="10" cy="14" r="3.5" fill="none" stroke="#fff" strokeWidth="1.6" strokeDasharray="5 2" />
      </Svg>
    </div>
  );
}

export default function App() {
  return (
    <div className="relative flex h-[800px] w-[1280px] flex-col overflow-hidden bg-[#efebe7]">
      <TopPanel />
      <div className="flex h-[750px] shrink-0">
        <MainWindow />
        <BackWindow />
      </div>
      <Taskbar />
      <Popup />
      <div className="absolute top-[261px] left-[349px]">
        <Svg w={14} h={20}>
          <rect x="0" y="0" width="5" height="3" fill="#00f800" />
          <path d="M1.5 2V16L5 13L7.5 18.5L10 17.5L7.5 12.5H12Z" fill="#fff" stroke="#222" />
        </Svg>
      </div>
    </div>
  );
}
